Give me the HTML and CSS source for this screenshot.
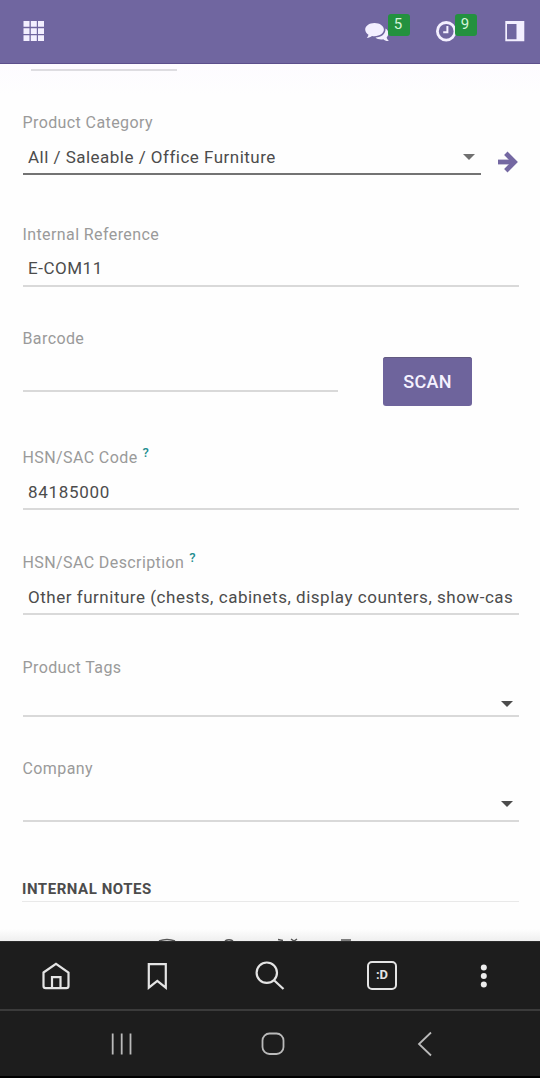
FILE: index.html
```html
<!DOCTYPE html>
<html lang="en">
<head>
<meta charset="utf-8">
<title>Product</title>
<link rel="stylesheet" href="styles.css">
</head>
<body>
<header class="topbar">
  <svg class="apps" width="22" height="22" viewBox="0 0 22 22" fill="#f3efff"><path d="M.5 1h6v5.800h-6zM7.800 1h6v5.800h-6zM15 1h6v5.800h-6zM.5 8.200h6v5.800h-6zM7.800 8.200h6v5.800h-6zM15 8.200h6v5.800h-6zM.5 15.300h6v5.800h-6zM7.800 15.300h6v5.800h-6zM15 15.300h6v5.800h-6z"/></svg>
  <div class="tool chat">
    <svg width="25" height="22" viewBox="0 0 25 22" fill="#f3efff"><path d="M20.500 6.500c3.200 2 4 6 1.200 8.800.2 1.700 1 2.700 2.300 3.700-2.500.3-4.300-.4-5.700-1.700-3 .5-6 0-7.800-1.800 6 0 10.500-4 10-9z"/><path d="M9.500 1C4.200 1 .2 3.900.2 7.600c0 2.200 1.400 4 3.300 5.200-.3 1.300-.9 2.300-1.700 3.200 2.100-.2 3.800-.9 5.200-2 .8.200 1.600.2 2.500.2 5.300 0 9.400-2.900 9.400-6.600S14.800 1 9.500 1z"/></svg>
    <span class="badge">5</span>
  </div>
  <div class="tool clock">
    <svg width="22" height="22" viewBox="0 0 22 22" fill="none" stroke="#f3efff"><circle cx="10.200" cy="11.300" r="8.800" stroke-width="2.800"/><path d="M11.400 6v6.300H7.200" stroke-width="2"/></svg>
    <span class="badge">9</span>
  </div>
  <svg class="panel" width="20" height="22" viewBox="0 0 20 22"><path fill="#f3efff" fill-rule="evenodd" d="M.3 0h19v20.300H.3zM2 3v15.300h9.500V3z"/></svg>
</header>
<main class="form">
  <div class="stub"></div>
  <div class="row">
    <section class="field category">
      <label class="label">Product Category</label>
      <div class="value">All / Saleable / Office Furniture<i class="caret"></i></div>
    </section>
    <svg class="go" width="21" height="22" viewBox="0 0 21 22" fill="none" stroke="#7468a2" stroke-width="4.800"><path d="M0 11H16"/><path d="M7.800 2.300l8.700 8.700-8.700 8.700"/></svg>
  </div>
  <section class="field reference">
    <label class="label">Internal Reference</label>
    <div class="value">E-COM11</div>
  </section>
  <div class="row">
    <section class="field barcode">
      <label class="label">Barcode</label>
    </section>
    <button class="scan">SCAN</button>
  </div>
  <section class="field code">
    <label class="label">HSN/SAC Code<sup class="help">?</sup></label>
    <div class="value">84185000</div>
  </section>
  <section class="field description">
    <label class="label">HSN/SAC Description<sup class="help">?</sup></label>
    <div class="value"><span class="clip">Other furniture (chests, cabinets, display counters, show-cas</span></div>
  </section>
  <section class="field tags">
    <label class="label">Product Tags</label>
    <div class="value"><i class="caret"></i></div>
  </section>
  <section class="field company">
    <label class="label">Company</label>
    <div class="value"><i class="caret"></i></div>
  </section>
  <h2 class="heading">INTERNAL NOTES</h2>
  <svg class="peek" width="540" height="3" viewBox="0 0 540 3" fill="none" stroke="#555" stroke-width="1.500"><path d="M159 3q8-3 16 0M225 3q4-2.500 8 0M278 1.500l5 1M291 1l3 2 3-2M341 2h10"/></svg>
</main>
<nav class="browser">
  <svg style="--x:56" width="30" height="30" viewBox="0 0 30 30"><path d="M2.500 11.500L15 2.800l12.500 8.700V25q0 2.200-2.200 2.200H4.700Q2.500 27.200 2.500 25zM11 27V16.200h8.500V27"/></svg>
  <svg style="--x:157" width="30" height="30" viewBox="0 0 30 30"><path d="M6.800 3.200h17v23.500l-8.500-6.900-8.500 6.900z"/></svg>
  <svg style="--x:270" width="30" height="30" viewBox="0 0 30 30"><circle cx="11.800" cy="11.700" r="10.200"/><path d="M19.300 19.500l9.200 8.500"/></svg>
  <span class="tabs" style="--x:382">:D</span>
  <svg style="--x:484" width="30" height="30" viewBox="0 0 30 30" class="dots"><circle cx="14.800" cy="6.500" r="3"/><circle cx="14.800" cy="15" r="3"/><circle cx="14.800" cy="23.500" r="3"/></svg>
</nav>
<nav class="system">
  <svg style="--x:122" width="30" height="30" viewBox="0 0 30 30"><path d="M5.700 4.500v21M14.700 4.500v21M23.500 4.500v21"/></svg>
  <svg style="--x:273" width="30" height="30" viewBox="0 0 30 30"><rect x="4.500" y="4.500" width="21" height="20.500" rx="7"/></svg>
  <svg style="--x:425" width="30" height="30" viewBox="0 0 30 30"><path d="M21 3.500L9 15l12 11.500"/></svg>
</nav>
</body>
</html>
```
FILE: styles.css
```css
* { box-sizing: border-box; }
body { margin: 0; width: 540px; height: 1078px; display: flex; flex-direction: column; overflow: hidden; background: #fefefe; font-family: Roboto, sans-serif; color: #4c4c4c; }
svg { display: block; flex: none; }

.topbar { height: 64px; flex: none; display: flex; align-items: flex-start; padding: 20px 15px 0 23px; background: #7066a0; border-bottom: 1px solid #5c4f8c; box-shadow: 0 1px 4px #e5dff3; }
.tool { position: relative; }
.chat { margin-left: auto; margin-top: 2px; width: 71px; }
.clock { width: 69px; }
.badge { position: absolute; left: 23px; top: -8px; width: 22px; height: 22px; border-radius: 3px; background: #23913f; color: #d5f5da; font-size: 15px; line-height: 21px; text-align: center; padding-right: 2px; }
.clock .badge { left: 19px; top: -6px; }
.panel { margin-top: 1px; }

.form { height: 877px; flex: none; padding: 0 21px 0 23px; overflow: hidden; background: linear-gradient(#fdfbff, #fefefe 30px, #fefefe 865px, #efefef); }
.stub { width: 146px; height: 7px; margin-left: 8px; border-bottom: 2px solid #dedde1; }
.row { display: flex; }
.field { display: flex; flex-direction: column; border-bottom: 2px solid #d9d9d9; }
.label { margin-left: -.5px; padding-top: 1px; font-size: 16px; line-height: 20px; letter-spacing: .4px; color: #9a9a9a; white-space: nowrap; }
.value { margin-top: auto; display: flex; align-items: center; padding: 0 6px 0 5px; height: 20px; font-size: 17px; line-height: 20px; letter-spacing: .52px; white-space: nowrap; }
.clip { flex: none; }
.caret { margin-left: auto; border: 6px solid transparent; border-top-color: #4c4c4c; border-bottom: 0; }
.help { margin-left: 5px; font-size: 13px; font-weight: 500; line-height: 0; vertical-align: 6px; color: #258f91; }

.category { width: 458px; height: 104px; padding: 41px 0 6px; border-color: #737373; }
.category .value { letter-spacing: .48px; }
.category .caret { border-top-color: #707070; }
.go { margin: 80px 0 0 17px; }
.reference { height: 112px; padding: 49px 0 7px; }
.barcode { width: 315px; height: 105px; padding-top: 41px; }
.scan { width: 89px; height: 49px; margin: 70px 0 -14px 45px; padding: 0; border: 0; border-radius: 3px; background: #6e649c; color: #f5f2ff; font: 500 18px/49px Roboto, sans-serif; letter-spacing: .3px; box-shadow: inset 0 1px #625a80; }
.code { height: 118px; padding: 55px 0 6px; }
.code .value { letter-spacing: .7px; }
.description { height: 105px; padding: 42px 0 6px; }
.tags { height: 102px; padding: 42px 0 1px; }
.company { height: 105px; padding: 41px 0 6px; }
.heading { height: 80px; margin: 0 0 0 -1px; padding: 57px 0 0; border-bottom: 1px solid #e9e9e9; font-size: 15px; line-height: 20px; font-weight: 700; letter-spacing: .55px; }
.peek { margin: 36px 0 0 -23px; }

.browser, .system { flex: none; display: grid; background: #1d1d1d; fill: none; stroke: #e4e4e4; stroke-width: 2.2; }
.browser > *, .system > * { grid-area: 1 / 1; margin-left: calc(var(--x) * 1px - 15px); }
.browser { height: 70px; padding-top: 19px; border-top: 1px solid #2c2c2c; border-bottom: 2px solid #3b3b3b; }
.tabs { width: 30px; height: 29px; border: 2px solid #e4e4e4; border-radius: 5px; color: #e4e4e4; font-size: 13px; font-weight: 700; line-height: 24px; text-align: center; }
.dots { fill: #eee; stroke: none; }
.system { height: 67px; padding-top: 18px; border-bottom: 2px solid #000; stroke: #bababa; stroke-width: 1.8; }
```
